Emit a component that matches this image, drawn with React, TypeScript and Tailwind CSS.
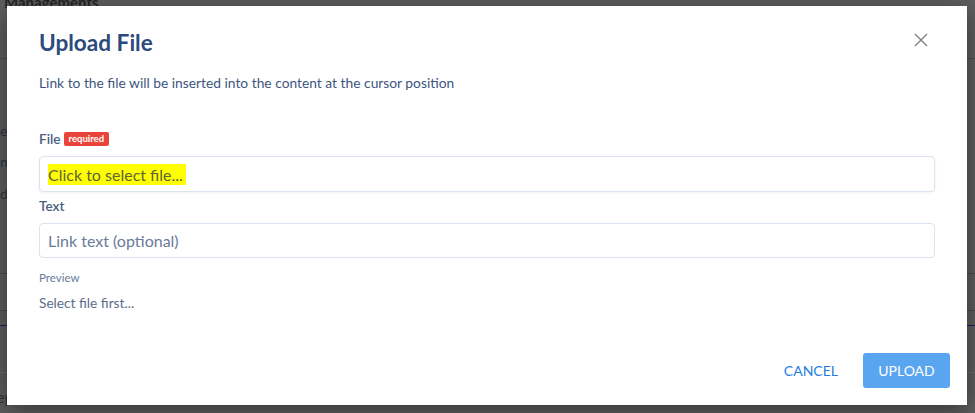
import React from "react";

export default function App() {
  return (
    <div
      className="relative w-full h-[413px] overflow-hidden bg-[#5f5f5f] pl-[7px] pt-[6px]"
      style={{ fontFamily: "Lato, 'Open Sans', sans-serif" }}
    >
      {/* page behind the overlay */}
      <div className="absolute inset-0 pointer-events-none">
        <div className="absolute left-[4px] top-[-9px] text-[15px] font-bold text-[#262626]">Managements</div>
        <div className="absolute left-0 top-[120px] text-[14px] text-[#2e3540]">e</div>
        <div className="absolute left-0 top-[151px] text-[14px] text-[#233650]">n</div>
        <div className="absolute left-0 top-[183px] text-[14px] text-[#2e3540]">d</div>
        <div className="absolute left-0 right-0 top-[58px] h-px bg-[#4e4e4e]" />
        <div className="absolute left-0 right-0 top-[273px] h-px bg-[#4a4a4a]" />
        <div className="absolute left-0 right-0 top-[310px] h-px bg-[#4a4a4a]" />
        <div className="absolute left-0 right-0 top-[325px] h-px bg-[#1c2260]" />
        <div className="absolute left-0 right-0 top-[372px] h-px bg-[#6a6a6a]" />
        <div className="absolute left-[-4px] top-[385px] text-[16px] text-[#2e3540]">ep</div>
      </div>

      {/* dialog */}
      <div className="relative flex h-[399px] w-[960px] flex-col bg-white shadow-[0_6px_24px_rgba(0,0,0,0.45)]">
        <div className="flex items-start justify-between pl-[32px] pr-[38px] pt-[23px]">
          <h2 className="text-[22.6px] font-bold leading-[28px] text-[#2c4a7c]">Upload File</h2>
          <button className="mt-[3px] text-[#808080]">
            <svg width="16" height="16" viewBox="0 0 16 16" fill="none" stroke="currentColor" strokeWidth="1.4">
              <path d="M2 2L14 14M14 2L2 14" />
            </svg>
          </button>
        </div>

        <p className="mt-[17px] px-[32px] text-[13.8px] leading-[18px] text-[#3d5580]">
          Link to the file will be inserted into the content at the cursor position
        </p>

        <div className="mt-[39px] px-[32px]">
          {/* File */}
          <div className="flex items-center gap-[3px]">
            <label className="text-[13.6px] font-semibold leading-[16px] text-[#4b5f82]">File</label>
            <span className="rounded-[2px] bg-[#e9443a] px-[5px] text-[9.5px] font-bold leading-[14px] text-white">
              required
            </span>
          </div>
          <div className="mt-[9px] flex h-[36px] items-center rounded-[4px] border border-[#dbe3ef] px-[8px] shadow-[0_1px_3px_rgba(60,90,140,0.08)]">
            <span className="bg-[#ffff00] pr-[3px] text-[16px] leading-[21px] text-[#5c6438]">Click to select file...</span>
          </div>

          {/* Text */}
          <label className="mt-[6px] block text-[13.6px] font-semibold leading-[16px] text-[#4b5f82]">Text</label>
          <div className="mt-[9px] flex h-[35px] items-center rounded-[4px] border border-[#dbe3ef] px-[8px]">
            <span className="text-[16px] leading-[20px] text-[#6a7a9a]">Link text (optional)</span>
          </div>

          {/* Preview */}
          <div className="mt-[13px] text-[11.5px] leading-[14px] text-[#6a7a9a]">Preview</div>
          <div className="mt-[10px] text-[13.7px] leading-[16px] text-[#5b6b8a]">Select file first...</div>
        </div>

        <div className="mt-auto mb-[17px] flex items-center justify-end gap-[23px] pr-[17px]">
          <button className="px-[2px] text-[14px] leading-[20px] text-[#1f7ddf]">CANCEL</button>
          <button className="h-[35px] w-[87px] rounded-[3px] bg-[#5aa5f0] text-[14px] leading-[20px] text-white">
            UPLOAD
          </button>
        </div>
      </div>
    </div>
  );
}
